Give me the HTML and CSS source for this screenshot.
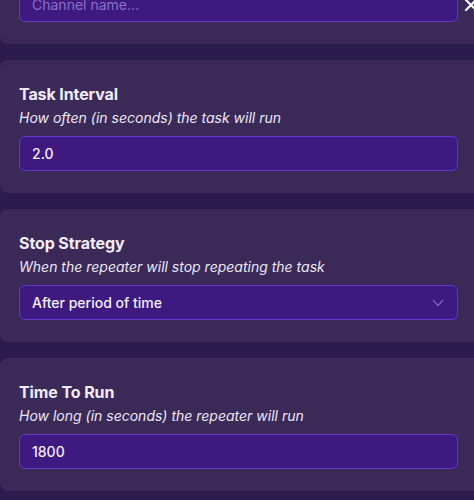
FILE: index.html
```html
<!DOCTYPE html>
<html>
<head>
<meta charset="utf-8">
<link rel="stylesheet" href="styles.css">
</head>
<body>
<div class="list">
  <section class="card">
    <h2 class="title">Channel</h2>
    <p class="desc">The channel to listen on</p>
    <div class="row">
      <div class="field placeholder">Channel name...</div>
      <svg class="clear" width="14" height="14" viewBox="0 0 14 14"><path d="M2 2 L12 12 M12 2 L2 12" stroke="#ffffff" stroke-width="2.2" stroke-linecap="round" fill="none"/></svg>
    </div>
  </section>
  <section class="card">
    <h2 class="title">Task Interval</h2>
    <p class="desc">How often (in seconds) the task will run</p>
    <div class="field">2.0</div>
  </section>
  <section class="card">
    <h2 class="title">Stop Strategy</h2>
    <p class="desc">When the repeater will stop repeating the task</p>
    <div class="field select">
      <span>After period of time</span>
      <svg class="chev" width="12" height="8" viewBox="0 0 12 8"><path d="M1 1 L6 6.5 L11 1" stroke="#7d5fb8" stroke-width="1.3" fill="none"/></svg>
    </div>
  </section>
  <section class="card">
    <h2 class="title">Time To Run</h2>
    <p class="desc">How long (in seconds) the repeater will run</p>
    <div class="field">1800</div>
  </section>
</div>
</body>
</html>
```
FILE: styles.css
```css
html, body {
  margin: 0;
  padding: 0;
  background: #2b1c4d;
  overflow: hidden;
  width: 474px;
  height: 500px;
}
body {
  font-family: Inter, "Noto Sans", sans-serif;
  color: #f1ecf8;
}
.list {
  display: flex;
  flex-direction: column;
  gap: 16px;
  margin-top: -89px;
  width: 500px;
}
.card {
  background: #3b2a58;
  border-radius: 8px;
  padding: 24px 0 22px 19px;
  box-sizing: border-box;
  height: 133px;
  display: flex;
  flex-direction: column;
}
.title {
  margin: 0;
  font-size: 16px;
  line-height: 20px;
  font-weight: 700;
  height: 20px;
  letter-spacing: -0.1px;
}
.desc {
  margin: 5px 0 0;
  font-size: 14px;
  line-height: 18px;
  font-style: italic;
  color: #ece6f5;
}
.row {
  display: flex;
  align-items: center;
  gap: 6px;
}
.field {
  margin-top: 9px;
  width: 439px;
  height: 35px;
  box-sizing: border-box;
  background: #3e1a80;
  border: 1px solid #6336cc;
  border-radius: 6px;
  padding: 0 12px;
  display: flex;
  align-items: center;
  font-size: 14px;
  font-weight: 500;
  color: #f4effa;
}
.placeholder {
  color: #8a6fc4;
  font-weight: 400;
}
.clear {
  margin-top: 9px;
}
.select {
  justify-content: space-between;
}
.chev {
  margin-right: 1px;
}
```
